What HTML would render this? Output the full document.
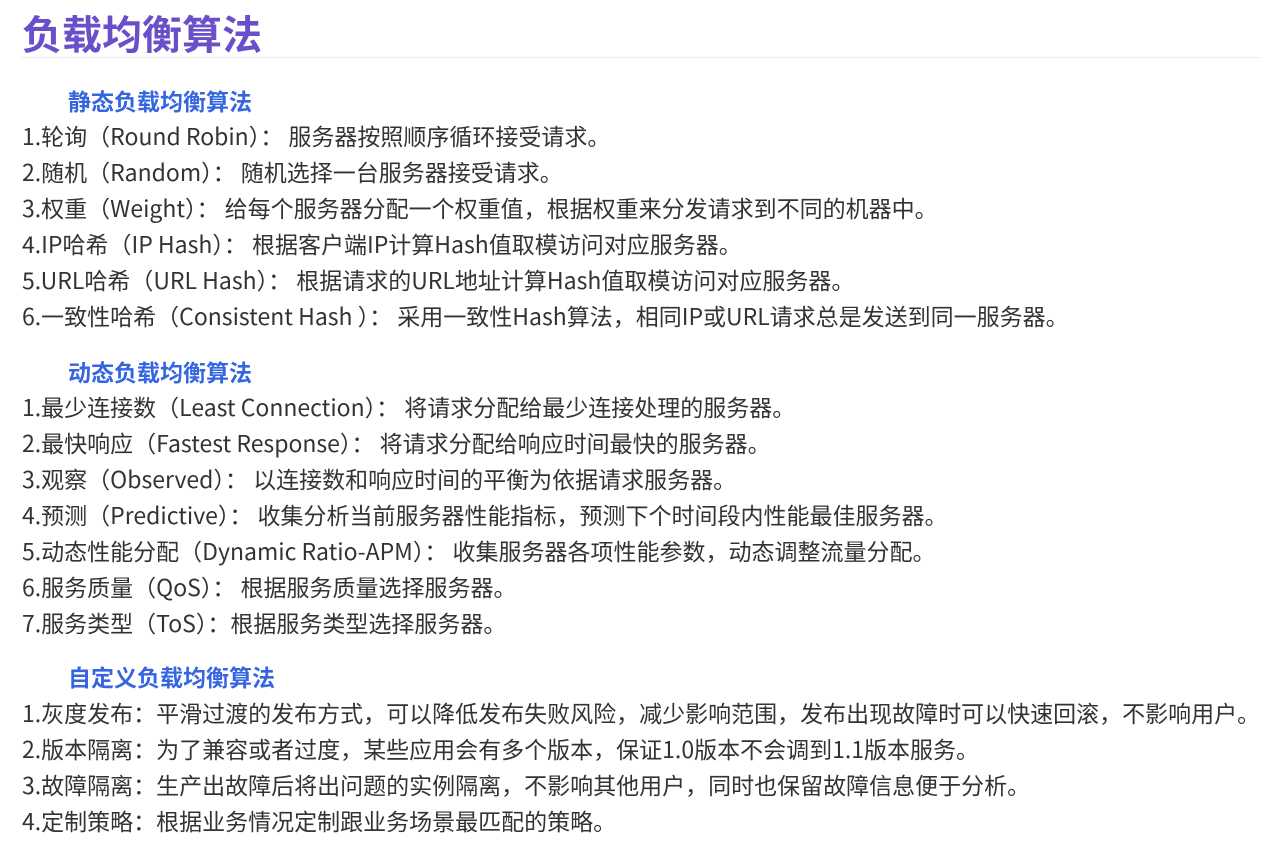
<!DOCTYPE html>
<html><head><meta charset="utf-8"><style>
body{margin:0;background:#fff;font-family:"Noto Sans CJK SC",sans-serif;color:#333;}
h1{position:absolute;left:22px;top:6px;margin:0;font-size:40px;line-height:52px;color:#6a4fc9;font-weight:bold;}
.rule{position:absolute;left:20px;right:0;top:57px;height:1px;background:#eee;}
.l{position:absolute;left:22px;font-size:23px;line-height:30px;white-space:nowrap;}
.h{position:absolute;left:68px;font-size:23px;line-height:30px;font-weight:bold;color:#3565e0;}
</style></head><body>
<h1>负载均衡算法</h1><div class="rule"></div>
<div class="h" style="top:85px">静态负载均衡算法</div>
<div class="l" style="top:120px">1.轮询（Round Robin）： 服务器按照顺序循环接受请求。</div>
<div class="l" style="top:156px">2.随机（Random）： 随机选择一台服务器接受请求。</div>
<div class="l" style="top:192px">3.权重（Weight）： 给每个服务器分配一个权重值，根据权重来分发请求到不同的机器中。</div>
<div class="l" style="top:228px">4.IP哈希（IP Hash）： 根据客户端IP计算Hash值取模访问对应服务器。</div>
<div class="l" style="top:264px">5.URL哈希（URL Hash）： 根据请求的URL地址计算Hash值取模访问对应服务器。</div>
<div class="l" style="top:300px">6.一致性哈希（Consistent Hash ）： 采用一致性Hash算法，相同IP或URL请求总是发送到同一服务器。</div>
<div class="h" style="top:356px">动态负载均衡算法</div>
<div class="l" style="top:391px">1.最少连接数（Least Connection）： 将请求分配给最少连接处理的服务器。</div>
<div class="l" style="top:427px">2.最快响应（Fastest Response）： 将请求分配给响应时间最快的服务器。</div>
<div class="l" style="top:463px">3.观察（Observed）： 以连接数和响应时间的平衡为依据请求服务器。</div>
<div class="l" style="top:499px">4.预测（Predictive）： 收集分析当前服务器性能指标，预测下个时间段内性能最佳服务器。</div>
<div class="l" style="top:535px">5.动态性能分配（Dynamic Ratio-APM）： 收集服务器各项性能参数，动态调整流量分配。</div>
<div class="l" style="top:571px">6.服务质量（QoS）： 根据服务质量选择服务器。</div>
<div class="l" style="top:607px">7.服务类型（ToS）：根据服务类型选择服务器。</div>
<div class="h" style="top:661px">自定义负载均衡算法</div>
<div class="l" style="top:697px">1.灰度发布：平滑过渡的发布方式，可以降低发布失败风险，减少影响范围，发布出现故障时可以快速回滚，不影响用户。</div>
<div class="l" style="top:733px">2.版本隔离：为了兼容或者过度，某些应用会有多个版本，保证1.0版本不会调到1.1版本服务。</div>
<div class="l" style="top:769px">3.故障隔离：生产出故障后将出问题的实例隔离，不影响其他用户，同时也保留故障信息便于分析。</div>
<div class="l" style="top:805px">4.定制策略：根据业务情况定制跟业务场景最匹配的策略。</div>
</body></html>
